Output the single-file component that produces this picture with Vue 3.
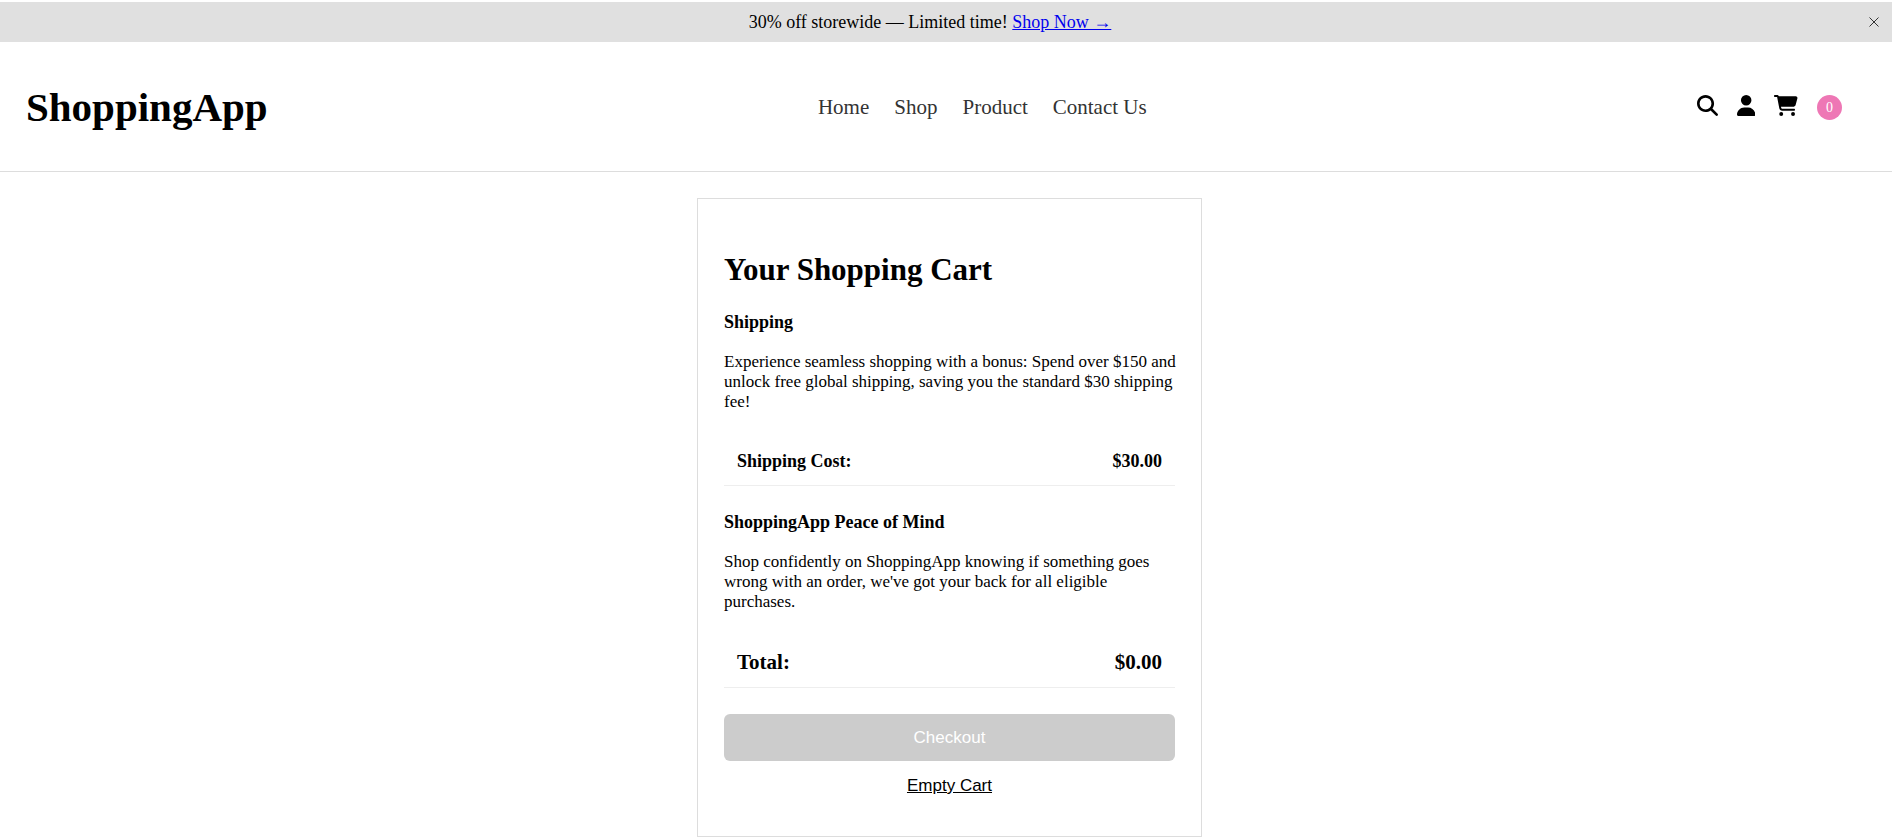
<script setup>
import { ref, computed } from 'vue'

const bannerOpen = ref(true)
const links = ['Home', 'Shop', 'Product', 'Contact Us']
const items = ref([])
const shippingFee = 30
const total = computed(() => items.value.reduce((sum, item) => sum + item.price, 0))
const money = (value) => `$${value.toFixed(2)}`
</script>

<template>
  <div class="app">
    <div v-if="bannerOpen" class="banner">
      <p class="banner-text">
        30% off storewide — Limited time! <a href="#shop">Shop Now →</a>
      </p>
      <button class="banner-close" type="button" aria-label="Close" @click="bannerOpen = false">
        <svg viewBox="0 0 10 10" aria-hidden="true"><path d="M0.5 0.5L9.5 9.5M9.5 0.5L0.5 9.5" /></svg>
      </button>
    </div>

    <header class="header">
      <h1 class="logo">ShoppingApp</h1>
      <nav class="nav">
        <a v-for="link in links" :key="link" href="#">{{ link }}</a>
      </nav>
      <div class="tools">
        <button type="button" aria-label="Search">
          <svg viewBox="0 0 512 512" aria-hidden="true"><path d="M416 208c0 45.900-14.900 88.300-40 122.700L502.600 457.400c12.500 12.500 12.500 32.800 0 45.300s-32.800 12.500-45.300 0L330.700 376c-34.400 25.200-76.800 40-122.700 40C93.100 416 0 322.900 0 208S93.100 0 208 0S416 93.100 416 208zM208 352a144 144 0 1 0 0-288 144 144 0 1 0 0 288z" /></svg>
        </button>
        <button type="button" aria-label="Account">
          <svg viewBox="0 0 448 512" aria-hidden="true"><path d="M224 256A128 128 0 1 0 224 0a128 128 0 1 0 0 256zm-45.700 48C79.800 304 0 383.800 0 482.300C0 498.700 13.300 512 29.700 512H418.300c16.400 0 29.700-13.300 29.700-29.700C448 383.800 368.200 304 269.700 304H178.300z" /></svg>
        </button>
        <button type="button" aria-label="Cart">
          <svg viewBox="0 0 576 512" aria-hidden="true"><path d="M0 24C0 10.700 10.700 0 24 0H69.500c22 0 41.500 12.800 50.600 32h411c26.300 0 45.500 25 38.600 50.400l-41 152.300c-8.500 31.400-37 53.300-69.500 53.300H170.700l5.400 28.500c2.200 11.300 12.100 19.500 23.600 19.500H488c13.300 0 24 10.700 24 24s-10.700 24-24 24H199.700c-34.600 0-64.300-24.600-70.700-58.500L77.400 54.500c-.7-3.800-4-6.500-7.900-6.500H24C10.700 48 0 37.300 0 24zM128 464a48 48 0 1 1 96 0 48 48 0 1 1 -96 0zm336-48a48 48 0 1 1 0 96 48 48 0 1 1 0-96z" /></svg>
        </button>
        <span class="count">{{ items.length }}</span>
      </div>
    </header>

    <main class="main">
      <section class="cart">
        <h2 class="title">Your Shopping Cart</h2>
        <h3 class="subtitle">Shipping</h3>
        <p class="text">
          Experience seamless shopping with a bonus: Spend over $150 and unlock free global
          shipping, saving you the standard $30 shipping fee!
        </p>
        <div class="row">
          <span>Shipping Cost:</span>
          <span>{{ money(shippingFee) }}</span>
        </div>
        <h3 class="subtitle">ShoppingApp Peace of Mind</h3>
        <p class="text">
          Shop confidently on ShoppingApp knowing if something goes wrong with an order, we've got
          your back for all eligible purchases.
        </p>
        <div class="row total">
          <span>Total:</span>
          <span>{{ money(total) }}</span>
        </div>
        <button class="checkout" type="button" :disabled="items.length === 0">Checkout</button>
        <button class="empty" type="button" @click="items = []">Empty Cart</button>
      </section>
    </main>
  </div>
</template>

<style>
body {
  margin: 0;
  background: #fff;
}
</style>

<style scoped>
.app {
  padding-top: 2px;
  color: #000;
  font-family: "Liberation Serif", "Times New Roman", serif;
  font-size: 18px;
}

button {
  padding: 0;
  border: 0;
  background: none;
  cursor: pointer;
}

.banner {
  display: flex;
  align-items: center;
  padding: 0 13px 0 0;
  background: #e0e0e0;
}

.banner-text {
  flex: 1;
  margin: 0;
  line-height: 40px;
  text-align: center;
}

.banner-text a {
  color: #0000ee;
}

.banner-close {
  display: flex;
  padding-left: 9px;
}

.banner-close svg {
  width: 10px;
  height: 10px;
  fill: none;
  stroke: #333;
  stroke-width: 1;
}

.header {
  display: flex;
  align-items: center;
  justify-content: space-between;
  padding: 41px 50px 40px 26px;
  border-bottom: 1px solid #ddd;
}

.logo {
  margin: 0;
  font-size: 41px;
  line-height: 48px;
}

.nav {
  display: flex;
  gap: 25px;
}

.nav a {
  color: #333;
  font-size: 21px;
  line-height: 24px;
  text-decoration: none;
}

.tools {
  display: flex;
  align-items: flex-start;
  gap: 19px;
}

.tools svg {
  display: block;
  height: 21px;
}

.count {
  width: 25px;
  border-radius: 50%;
  background: #ee77b5;
  color: #fff;
  font-size: 14px;
  line-height: 25px;
  text-align: center;
}

.main {
  padding: 26px 20px 3px 27px;
}

.cart {
  display: flex;
  flex-direction: column;
  box-sizing: border-box;
  max-width: 505px;
  margin: 0 auto;
  padding: 53px 26px 26px;
  border: 1px solid #ddd;
}

.title {
  margin: 0 0 24px;
  font-size: 31px;
  line-height: 36px;
}

.subtitle {
  margin: 0 0 20px;
  font-size: 18px;
  line-height: 20px;
}

.text {
  margin: 0 -4px 26px 0;
  font-size: 17px;
  line-height: 20px;
}

.row {
  display: flex;
  justify-content: space-between;
  margin-bottom: 26px;
  padding: 13px;
  border-bottom: 1px solid #eee;
  font-weight: bold;
  line-height: 21px;
}

.total {
  font-size: 21px;
  line-height: 23px;
}

.checkout,
.empty {
  font-family: "Liberation Sans", Arial, sans-serif;
  font-size: 17px;
}

.checkout {
  border-radius: 6px;
  background: #ccc;
  color: #fff;
  line-height: 47px;
}

.empty {
  align-self: center;
  color: #000;
  line-height: 49px;
  text-decoration: underline;
}
</style>
